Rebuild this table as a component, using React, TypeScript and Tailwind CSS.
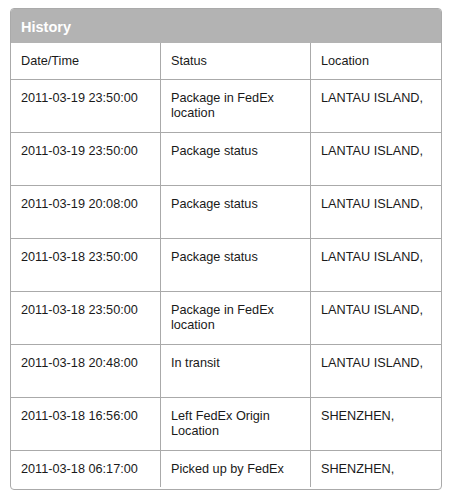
import React from "react";

const rows: [string, string, string][] = [
  ["2011-03-19 23:50:00", "Package in FedEx location", "LANTAU ISLAND,"],
  ["2011-03-19 23:50:00", "Package status", "LANTAU ISLAND,"],
  ["2011-03-19 20:08:00", "Package status", "LANTAU ISLAND,"],
  ["2011-03-18 23:50:00", "Package status", "LANTAU ISLAND,"],
  ["2011-03-18 23:50:00", "Package in FedEx location", "LANTAU ISLAND,"],
  ["2011-03-18 20:48:00", "In transit", "LANTAU ISLAND,"],
  ["2011-03-18 16:56:00", "Left FedEx Origin Location", "SHENZHEN,"],
  ["2011-03-18 06:17:00", "Picked up by FedEx", "SHENZHEN,"],
];

function Row({ cells, height, last }: { cells: string[]; height: string; last?: boolean }) {
  return (
    <div className={`grid grid-cols-[149px_1px_149px_1px_130px] ${last ? "" : "border-b border-[#aaaaaa]"}`}>
      <div className={`${height} px-[10px] pt-[11px]`}>{cells[0]}</div>
      <div className="bg-[#aaaaaa]" />
      <div className={`${height} px-[10px] pt-[11px] pr-[20px]`}>{cells[1]}</div>
      <div className="bg-[#aaaaaa]" />
      <div className={`${height} px-[10px] pt-[11px]`}>{cells[2]}</div>
    </div>
  );
}

export default function App() {
  return (
    <div className="w-[454px] h-[503px] bg-white pt-[8px] pl-[10px]" style={{ fontFamily: '"Liberation Sans", Arial, Helvetica, sans-serif' }}>
      <div className="w-[432px] border border-[#aaaaaa] rounded-[4px] overflow-hidden pb-[2px] text-[12.7px] leading-[15px] text-[#1a1a1a]">
        <div className="h-[34px] bg-[#b3b3b3] pl-[10px] pt-[10px] text-white font-bold text-[14.5px] leading-[17px]">History</div>
        <Row cells={["Date/Time", "Status", "Location"]} height="h-[36px]" />
        {rows.map((r, i) => (
          <Row key={i} cells={r} height={i === rows.length - 1 ? "h-[36px]" : "h-[52px]"} last={i === rows.length - 1} />
        ))}
      </div>
    </div>
  );
}
